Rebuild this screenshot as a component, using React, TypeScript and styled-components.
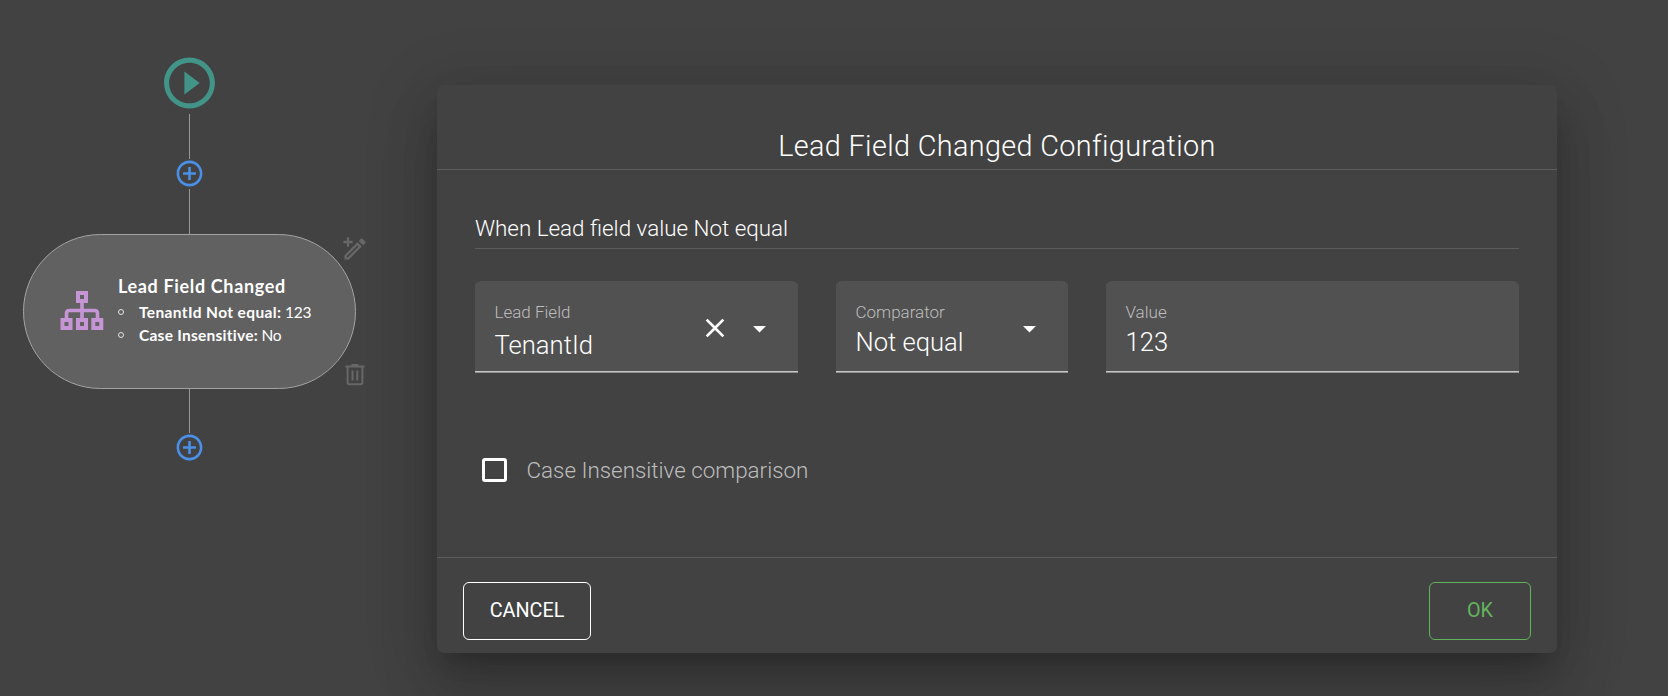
import React from "react";
import styled, { createGlobalStyle } from "styled-components";

const GlobalStyle = createGlobalStyle`
  * { box-sizing: border-box; }
  body { margin: 0; background: #424242; color: #fff; font-family: Roboto, sans-serif; }
  svg { display: block; flex: none; }
`;

const Page = styled.div`
  display: flex;
  align-items: flex-start;
  width: 1668px;
  height: 696px;
  overflow: hidden;
  background: #424242;
`;

const Flow = styled.div`
  flex: none;
  display: flex;
  flex-direction: column;
  align-items: center;
  width: 379px;
  margin-right: 58px;
  padding-top: 52px;
`;

const Line = styled.div<{ $length: number }>`
  width: 1px;
  height: ${(p) => p.$length}px;
  background: #979797;
`;

const StartMarker = styled.div`
  height: 62px;
`;

const AddButton = styled.div`
  display: flex;
  justify-content: center;
  align-items: flex-end;
  width: 31px;
  height: 30px;
  color: #4a90e8;
`;

const Node = styled.div`
  position: relative;
  display: flex;
  align-items: flex-start;
  width: 333px;
  height: 155px;
  padding: 41px 0 0 36px;
  border: 1px solid #a3a3a3;
  border-radius: 78px;
  background: #616161;
  font-family: Lato, sans-serif;
`;

const NodeIcon = styled.div`
  padding-top: 15px;
  margin-right: 14px;
`;

const NodeTitle = styled.div`
  font-size: 18px;
  font-weight: 700;
  line-height: 20px;
  letter-spacing: 0.65px;
  white-space: nowrap;
`;

const NodeList = styled.ul`
  list-style: none;
  margin: 4px 0 0;
  padding: 0;
`;

const NodeItem = styled.li<{ $spacing: number }>`
  display: flex;
  align-items: center;
  height: 23px;
  font-size: 15.5px;
  font-weight: 400;
  letter-spacing: -0.2px;
  white-space: nowrap;
  b { font-weight: 700; letter-spacing: ${(p) => p.$spacing}px; margin-right: 3.5px; }
`;

const Bullet = styled.span`
  width: 6px;
  height: 6px;
  margin: 0 15px 0 0;
  border: 1px solid #e4e4e4;
  border-radius: 50%;
`;

const NodeAction = styled.div<{ $top: number; $left: number }>`
  position: absolute;
  top: ${(p) => p.$top}px;
  left: ${(p) => p.$left}px;
  color: #676767;
`;

const Dialog = styled.section`
  flex: none;
  width: 1120px;
  height: 568px;
  margin-top: 85px;
  display: flex;
  flex-direction: column;
  border-radius: 7px;
  background: #424242;
  box-shadow: 0 16px 22px -10px rgba(0, 0, 0, 0.2), 0 35px 55px 4px rgba(0, 0, 0, 0.14),
    0 13px 66px 12px rgba(0, 0, 0, 0.12);
`;

const DialogTitle = styled.h2`
  margin: 0;
  padding: 41px 0 3px;
  border-bottom: 1px solid #5c5c5c;
  text-align: center;
  font-size: 28.8px;
  font-weight: 300;
  line-height: 40px;
  letter-spacing: 0.36px;
`;

const DialogBody = styled.div`
  flex: 1;
  padding: 43px 38px 0;
`;

const SectionTitle = styled.h3`
  margin: 0 0 32px;
  padding-bottom: 5px;
  border-bottom: 1px solid #5c5c5c;
  font-size: 22.4px;
  font-weight: 300;
  line-height: 30px;
`;

const Fields = styled.div`
  display: grid;
  grid-template-columns: 323px 232px 413px;
  gap: 38px;
`;

const Field = styled.div`
  display: flex;
  justify-content: space-between;
  height: 92px;
  padding: 21px 23px 0 19.5px;
  border-radius: 6px 6px 0 0;
  background: #515151;
  box-shadow: inset 0 -1px #909090, inset 0 -2px #c6c6c6;
`;

const FieldLabel = styled.div`
  font-size: 17px;
  font-weight: 300;
  line-height: 20px;
  color: #bdbdbd;
`;

const FieldValue = styled.div<{ $gap?: number }>`
  margin-top: ${(p) => p.$gap ?? 5}px;
  font-size: 25.6px;
  font-weight: 300;
  line-height: 30px;
`;

const FieldIcons = styled.div`
  display: flex;
  align-items: center;
  gap: 13.5px;
  height: 32px;
  margin-top: 10px;
`;

const CheckRow = styled.label`
  display: flex;
  align-items: center;
  margin-top: 82px;
  padding-left: 7px;
  font-size: 22.4px;
  font-weight: 300;
  line-height: 30px;
  color: #bdbdbd;
`;

const CheckBox = styled.span`
  width: 25px;
  height: 24px;
  margin-right: 19.5px;
  border: 3px solid #fff;
  border-radius: 3px;
`;

const Footer = styled.footer`
  display: flex;
  justify-content: space-between;
  height: 96px;
  padding: 24px 26px 0;
  border-top: 1px solid #5c5c5c;
`;

const Button = styled.button<{ $width: number; $color: string }>`
  width: ${(p) => p.$width}px;
  height: 58px;
  padding: 0 0 2px;
  border: 1px solid ${(p) => p.$color};
  border-radius: 6px;
  background: transparent;
  color: ${(p) => p.$color};
  font: 400 19.8px Roboto, sans-serif;
`;

const PlayIcon = () => (
  <svg width="61" height="62" viewBox="0 0 24 24" fill="#429488">
    <path d="M10 16.5l6-4.5-6-4.5v9zM12 2C6.48 2 2 6.48 2 12s4.48 10 10 10 10-4.48 10-10S17.52 2 12 2zm0 18c-4.41 0-8-3.59-8-8s3.59-8 8-8 8 3.59 8 8-3.59 8-8 8z" />
  </svg>
);

const PlusIcon = () => (
  <svg width="31" height="31" viewBox="0 0 24 24" fill="currentColor">
    <path d="M13 7h-2v4H7v2h4v4h2v-4h4v-2h-4V7zm-1-5C6.48 2 2 6.48 2 12s4.48 10 10 10 10-4.48 10-10S17.52 2 12 2zm0 18c-4.41 0-8-3.59-8-8s3.59-8 8-8 8 3.59 8 8-3.59 8-8 8z" />
  </svg>
);

const SitemapIcon = () => (
  <svg width="44" height="40" viewBox="0 0 44 40" fill="none" stroke="#c695d6" strokeWidth="4">
    <rect x="18" y="2" width="8" height="8" />
    <rect x="2.5" y="29" width="8" height="8" />
    <rect x="18" y="29" width="8" height="8" />
    <rect x="33.3" y="29" width="8" height="8" />
    <path d="M22 12v15M6.5 27v-4.500q0-3 3-3h25q3 0 3 3V27" strokeWidth="3.6" />
  </svg>
);

const PencilPlusIcon = () => (
  <svg width="28" height="28" viewBox="0 0 24 24" fill="currentColor" fillRule="evenodd">
    <path d="M14.06 9L15 9.94L5.92 19H5V18.08L14.06 9M17.66 3C17.41 3 17.15 3.1 16.96 3.29L15.13 5.12L18.88 8.87L20.71 7.04C21.1 6.65 21.1 6 20.71 5.63L18.37 3.29C18.17 3.09 17.92 3 17.66 3M14.06 6.19L3 17.25V21H6.75L17.81 9.94L14.06 6.19M7 2V5H10V7H7V10H5V7H2V5H5V2H7Z" />
  </svg>
);

const TrashIcon = () => (
  <svg width="20" height="22" viewBox="0 0 20 22" fill="none" stroke="currentColor" strokeWidth="2">
    <path d="M6.500 1h7M.4 2.500h19.200M2.600 3v15.500q0 1.800 1.800 1.800h11.200q1.800 0 1.800-1.800V3M7.500 6.500v10M12.300 6.500v10" />
  </svg>
);

const CloseIcon = () => (
  <svg width="32" height="32" viewBox="0 0 24 24" fill="#fff">
    <path d="M19 6.41L17.59 5 12 10.59 6.41 5 5 6.41 10.59 12 5 17.59 6.41 19 12 13.41 17.59 19 19 17.59 13.41 12z" />
  </svg>
);

const ArrowIcon = () => (
  <svg width="31" height="31" viewBox="0 0 24 24" fill="#fff">
    <path d="M7 10l5 5 5-5z" />
  </svg>
);

export default function App() {
  return (
    <Page>
      <GlobalStyle />
      <Flow>
        <StartMarker><PlayIcon /></StartMarker>
        <Line $length={45} />
        <AddButton><PlusIcon /></AddButton>
        <Line $length={45} />
        <Node>
          <NodeIcon><SitemapIcon /></NodeIcon>
          <div>
            <NodeTitle>Lead Field Changed</NodeTitle>
            <NodeList>
              <NodeItem $spacing={0.38}><Bullet /><b>TenantId Not equal:</b>123</NodeItem>
              <NodeItem $spacing={0.25}><Bullet /><b>Case Insensitive:</b>No</NodeItem>
            </NodeList>
          </div>
          <NodeAction $top={0} $left={317}><PencilPlusIcon /></NodeAction>
          <NodeAction $top={129} $left={321}><TrashIcon /></NodeAction>
        </Node>
        <Line $length={44} />
        <AddButton><PlusIcon /></AddButton>
      </Flow>

      <Dialog>
        <DialogTitle>Lead Field Changed Configuration</DialogTitle>
        <DialogBody>
          <SectionTitle>When Lead field value Not equal</SectionTitle>
          <Fields>
            <Field>
              <div>
                <FieldLabel>Lead Field</FieldLabel>
                <FieldValue $gap={8}>TenantId</FieldValue>
              </div>
              <FieldIcons>
                <CloseIcon />
                <ArrowIcon />
              </FieldIcons>
            </Field>
            <Field>
              <div>
                <FieldLabel>Comparator</FieldLabel>
                <FieldValue>Not equal</FieldValue>
              </div>
              <FieldIcons><ArrowIcon /></FieldIcons>
            </Field>
            <Field>
              <div>
                <FieldLabel>Value</FieldLabel>
                <FieldValue>123</FieldValue>
              </div>
            </Field>
          </Fields>
          <CheckRow>
            <CheckBox />
            Case Insensitive comparison
          </CheckRow>
        </DialogBody>
        <Footer>
          <Button $width={128} $color="#ffffff">CANCEL</Button>
          <Button $width={102} $color="#63b35c">OK</Button>
        </Footer>
      </Dialog>
    </Page>
  );
}
